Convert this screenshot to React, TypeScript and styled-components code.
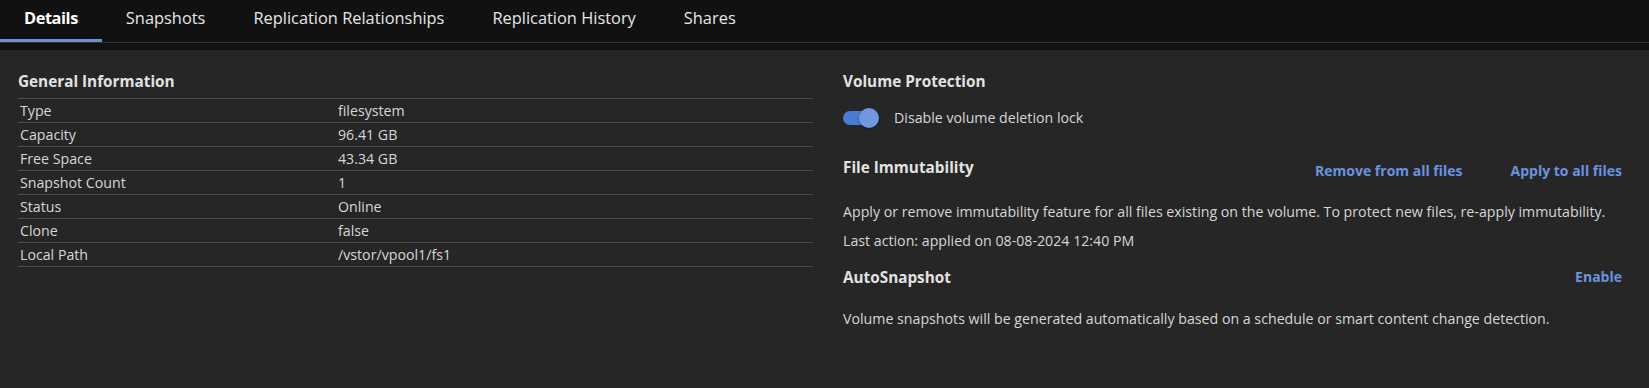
import { useState } from "react";
import styled, { createGlobalStyle } from "styled-components";

const GlobalStyle = createGlobalStyle`
  html, body {
    margin: 0;
    padding: 0;
    background: #262626;
    font-family: "Open Sans", Lato, sans-serif;
    color: #d6d6d6;
  }
  * {
    box-sizing: border-box;
  }
`;

const tabs = [
  "Details",
  "Snapshots",
  "Replication Relationships",
  "Replication History",
  "Shares",
];

const info = [
  ["Type", "filesystem"],
  ["Capacity", "96.41 GB"],
  ["Free Space", "43.34 GB"],
  ["Snapshot Count", "1"],
  ["Status", "Online"],
  ["Clone", "false"],
  ["Local Path", "/vstor/vpool1/fs1"],
];

export default function App() {
  const [active, setActive] = useState(0);
  const [locked, setLocked] = useState(true);

  return (
    <Page>
      <GlobalStyle />
      <Header>
        <TabList>
          {tabs.map((tab, index) => (
            <Tab
              key={tab}
              $active={index === active}
              onClick={() => setActive(index)}
            >
              {tab}
            </Tab>
          ))}
        </TabList>
      </Header>
      <Content>
        <Column>
          <Heading>General Information</Heading>
          <Table>
            <tbody>
              {info.map(([label, value]) => (
                <tr key={label}>
                  <Cell $label>{label}</Cell>
                  <Cell>{value}</Cell>
                </tr>
              ))}
            </tbody>
          </Table>
        </Column>
        <Column>
          <Heading>Volume Protection</Heading>
          <ToggleRow>
            <Switch $on={locked} onClick={() => setLocked((prev) => !prev)}>
              <Thumb $on={locked} />
            </Switch>
            <Text>Disable volume deletion lock</Text>
          </ToggleRow>

          <SectionHeader $top={25} $align="flex-start">
            <Heading>File Immutability</Heading>
            <Actions>
              <LinkButton>Remove from all files</LinkButton>
              <LinkButton>Apply to all files</LinkButton>
            </Actions>
          </SectionHeader>
          <Text $top={15}>
            Apply or remove immutability feature for all files existing on the
            volume. To protect new files, re-apply immutability.
          </Text>
          <Text $top={9}>Last action: applied on 08-08-2024 12:40 PM</Text>

          <SectionHeader $top={10} $align="center">
            <Heading>AutoSnapshot</Heading>
            <Actions>
              <LinkButton>Enable</LinkButton>
            </Actions>
          </SectionHeader>
          <Text $top={16}>
            Volume snapshots will be generated automatically based on a schedule
            or smart content change detection.
          </Text>
        </Column>
      </Content>
    </Page>
  );
}

const Page = styled("div")({
  minHeight: "100vh",
  background: "#262626",
});

const Header = styled("div")({
  background: "#111111",
  paddingBottom: "7px",
});

const TabList = styled("div")({
  display: "flex",
  borderBottom: "1px solid #343434",
});

const Tab = styled("button")<{ $active?: boolean }>(({ $active }) => ({
  background: "transparent",
  border: "none",
  borderBottom: `3px solid ${$active ? "#6b90d8" : "transparent"}`,
  padding: "6px 24px 9px",
  height: "42px",
  fontFamily: "inherit",
  fontSize: "16.4px",
  lineHeight: "24px",
  fontWeight: $active ? 700 : 400,
  letterSpacing: $active ? "-0.45px" : "normal",
  color: $active ? "#ffffff" : "#e6e6e6",
  cursor: "pointer",
}));

const Content = styled("div")({
  display: "grid",
  gridTemplateColumns: "795px 1fr",
  columnGap: "30px",
  padding: "19px 17px 0 18px",
});

const Column = styled("div")({
  display: "flex",
  flexDirection: "column",
});

const Heading = styled("h3")({
  margin: 0,
  fontSize: "15.3px",
  lineHeight: "24px",
  fontWeight: 700,
  color: "#e2e2e2",
});

const Table = styled("table")({
  width: "100%",
  marginTop: "5px",
  borderCollapse: "collapse",
  fontSize: "14.2px",
  color: "#d6d6d6",

  tr: {
    borderTop: "1px solid #4a4a4a",
    borderBottom: "1px solid #4a4a4a",
  },
});

const Cell = styled("td")<{ $label?: boolean }>(({ $label }) => ({
  width: $label ? "40%" : "60%",
  height: "24px",
  padding: "0 2px",
  lineHeight: "20px",
  verticalAlign: "middle",
}));

const ToggleRow = styled("div")({
  display: "flex",
  alignItems: "center",
  gap: "17px",
  marginTop: "13px",
  height: "24px",
});

const Switch = styled("button")<{ $on: boolean }>(({ $on }) => ({
  position: "relative",
  width: "34px",
  height: "14px",
  padding: 0,
  border: "none",
  borderRadius: "7px",
  background: $on ? "#4a7bd6" : "#5a5a5a",
  cursor: "pointer",
}));

const Thumb = styled("span")<{ $on: boolean }>(({ $on }) => ({
  position: "absolute",
  top: "-3px",
  left: $on ? "16px" : "-2px",
  width: "20px",
  height: "20px",
  borderRadius: "50%",
  background: $on ? "#7098e0" : "#bdbdbd",
  boxShadow: "0 1px 3px rgba(0, 0, 0, 0.4)",
}));

const SectionHeader = styled("div")<{ $top: number; $align: string }>(
  ({ $top, $align }) => ({
    display: "flex",
    justifyContent: "space-between",
    alignItems: $align,
    marginTop: `${$top}px`,
  })
);

const Actions = styled("div")({
  display: "flex",
  gap: "28px",
});

const LinkButton = styled("button")({
  background: "transparent",
  border: "none",
  padding: "6px 10px",
  fontFamily: "inherit",
  fontSize: "14px",
  lineHeight: "20px",
  fontWeight: 700,
  color: "#6b93e0",
  cursor: "pointer",
});

const Text = styled("p")<{ $top?: number }>(({ $top = 0 }) => ({
  margin: `${$top}px 0 0`,
  fontSize: "14.2px",
  lineHeight: "20px",
  color: "#d6d6d6",
}));
